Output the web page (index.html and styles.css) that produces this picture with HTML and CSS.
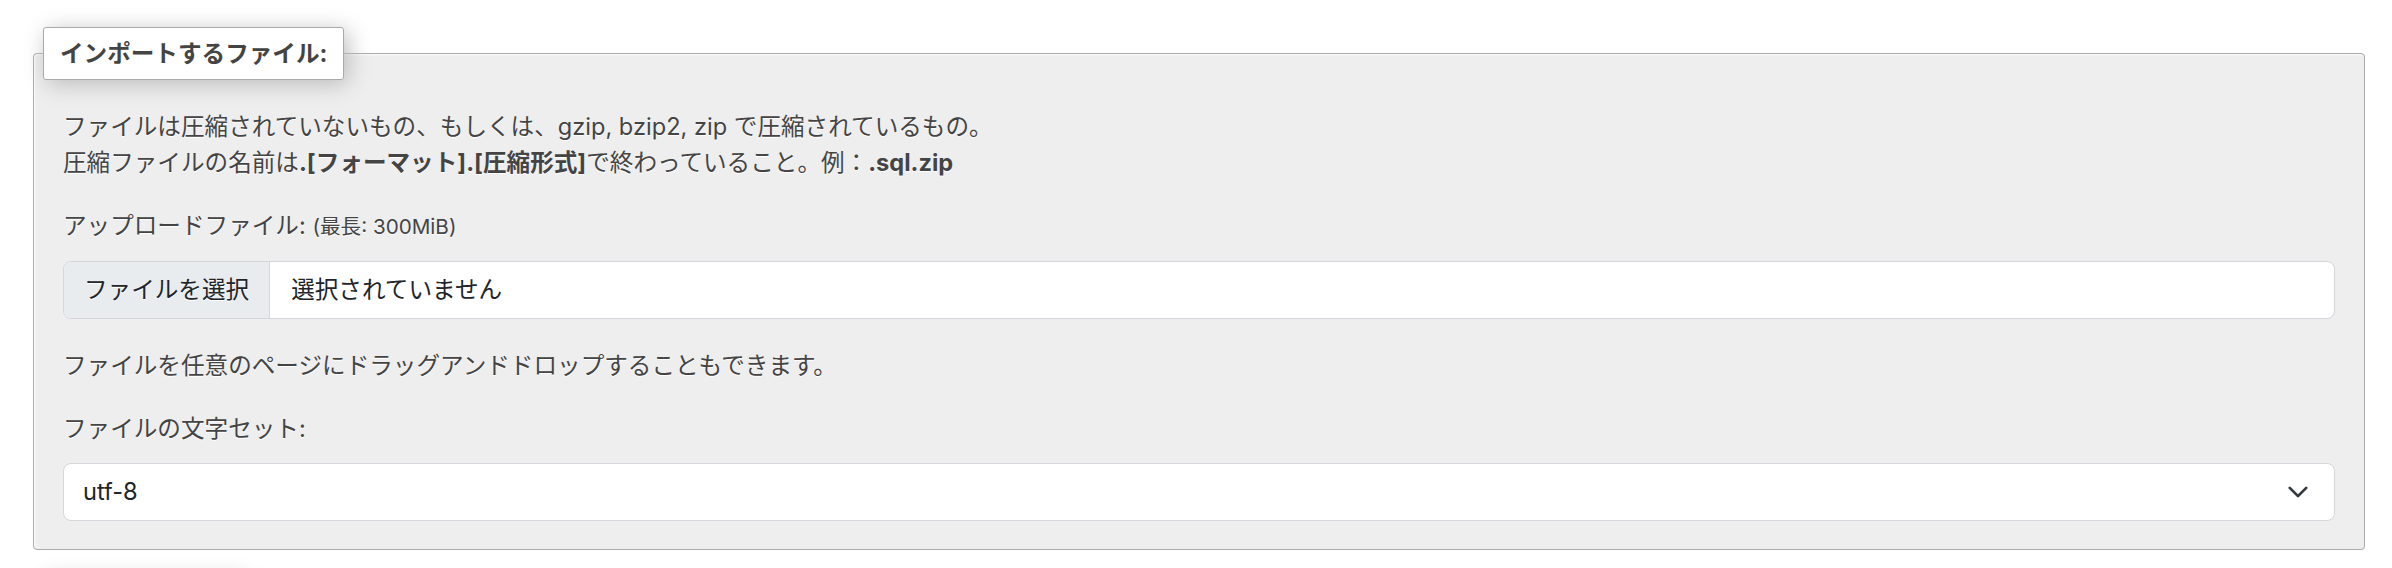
FILE: index.html
```html
<!DOCTYPE html>
<html lang="ja">
<head>
  <meta charset="UTF-8">
  <meta name="viewport" content="width=device-width, initial-scale=1.0">
  <title>インポート</title>
  <link rel="stylesheet" href="styles.css">
</head>
<body>
  <div class="page">
    <fieldset class="panel">
      <legend>インポートするファイル:</legend>
      <div class="panel-body">
        <p class="note">ファイルは圧縮されていないもの、もしくは、gzip, bzip2, zip で圧縮されているもの。<br>圧縮ファイルの名前は<b>.[フォーマット].[圧縮形式]</b>で終わっていること。例：<b>.sql.zip</b></p>

        <div class="field">
          <label class="field-label">アップロードファイル: <small>(最長: 300MiB)</small></label>
          <div class="file-input">
            <span class="file-btn">ファイルを選択</span>
            <span class="file-name">選択されていません</span>
          </div>
        </div>

        <p class="note">ファイルを任意のページにドラッグアンドドロップすることもできます。</p>

        <div class="field">
          <label class="field-label">ファイルの文字セット:</label>
          <div class="select">
            <span>utf-8</span>
            <svg class="chevron" width="22" height="22" viewBox="0 0 16 16"><path d="m2 5 6 6 6-6" fill="none" stroke="#343a40" stroke-width="2" stroke-linecap="round" stroke-linejoin="round"/></svg>
          </div>
        </div>
      </div>
    </fieldset>
    <!-- top of the next section's legend peeks in below -->
    <div class="next-tab"></div>
  </div>
</body>
</html>
```

FILE: styles.css
```css
body {
  margin: 0;
  background: #fff;
  color: #444;
  font-family: "Inter", "Noto Sans CJK JP", sans-serif;
  font-size: 23.6px;
  line-height: 36px;
}
.page {
  padding: 27px 27px 0 33px;
}
.panel {
  margin: 0;
  padding: 29px 9px 28px;
  border: 1px solid #aaa;
  border-radius: 4px;
  background: #eee;
  box-shadow: 1px 1px 2px #fff inset;
  text-shadow: 0 1px 0 #fff;
}
.panel legend {
  padding: 7.5px 16px;
  border: 1px solid #aaa;
  border-radius: 3px;
  background: #fff;
  color: #444;
  font-weight: bold;
  box-shadow: 4px 4px 22px #bbb;
}
.panel-body {
  padding: 0 20px;
}
.note {
  margin: 0 0 27px;
}
.note b {
  font-weight: bold;
}
.field {
  margin-bottom: 29px;
}
.field:last-child {
  margin-bottom: 0;
}
.field-label {
  display: block;
  margin-bottom: 16px;
}
.field-label small {
  font-size: 0.875em;
}
.file-input,
.select {
  display: flex;
  align-items: center;
  height: 58px;
  box-sizing: border-box;
  border: 1px solid #d3d7db;
  border-radius: 8px;
  background: #fff;
  color: #212529;
  overflow: hidden;
}
.file-btn {
  display: flex;
  align-items: center;
  height: 100%;
  padding: 0 20px;
  background: #e9ecef;
  border-right: 1px solid #d3d7db;
}
.file-name {
  padding-left: 21px;
}
.select {
  justify-content: space-between;
  padding: 0 25px 0 19px;
}
.chevron {
  display: block;
}
.next-tab {
  width: 200px;
  height: 53px;
  margin: 26px 0 0 10px;
  background: #fff;
  box-shadow: 4px 4px 22px #bbb;
}
```
